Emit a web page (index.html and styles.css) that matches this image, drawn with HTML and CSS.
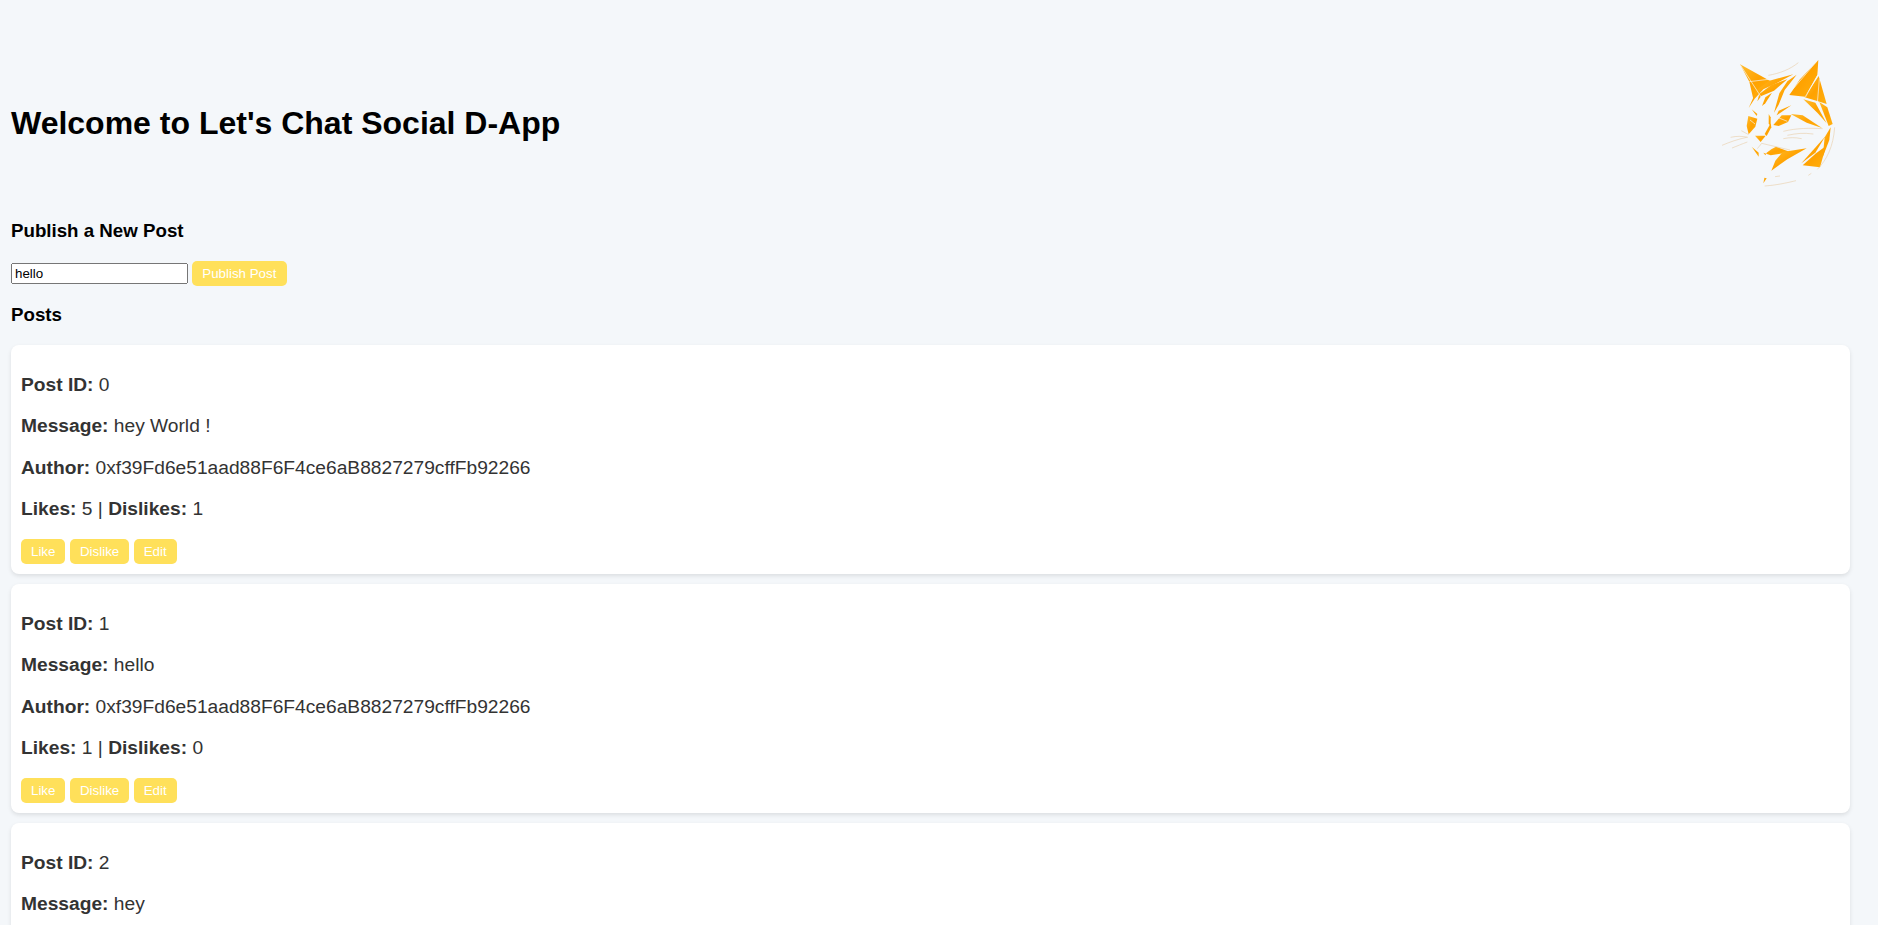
FILE: index.html
```html
<!DOCTYPE html>
<html lang="en">
<head>
  <meta charset="UTF-8">
  <title>Let's Chat Social D-App</title>
  <link rel="stylesheet" href="styles.css">
</head>
<body>

  <header class="top-bar">
    <h1>Welcome to Let's Chat Social D-App</h1>
    <svg class="logo" viewBox="0 0 534 480">
      <defs>
        <linearGradient id="fur" x1="0" y1="0" x2="1" y2="1">
          <stop offset="0" stop-color="#ffbc2e"></stop>
          <stop offset="0.5" stop-color="#ffa200"></stop>
          <stop offset="1" stop-color="#ffb010"></stop>
        </linearGradient>
      </defs>
      <g fill="url(#fur)">
        <!-- left ear and forehead bands -->
        <polygon points="120,73 212,124 178,150 160,178 148,125"></polygon>
        <polygon points="208,122 280,103 232,128 190,148 164,176 146,204 170,150"></polygon>
        <polygon points="215,134 262,118 222,152 184,168 172,184 178,162"></polygon>
        <polygon points="290,104 254,150 236,194 222,218 238,160 262,124"></polygon>
        <polygon points="196,172 216,158 196,190 186,198"></polygon>
        <!-- right ear and side of the head -->
        <polygon points="355,60 352,105 315,170 268,165 300,118"></polygon>
        <polygon points="356,108 380,192 354,184 314,172"></polygon>
        <polygon points="358,186 382,202 398,252 386,258"></polygon>
        <polygon points="310,178 346,188 380,250 352,218"></polygon>
        <!-- eyes and brow stripes -->
        <polygon points="145,228 172,236 166,260 146,283 140,258"></polygon>
        <polygon points="220,255 245,226 274,226 264,246 236,258"></polygon>
        <polygon points="155,208 172,222 170,228"></polygon>
        <polygon points="236,212 274,196 248,214 230,226"></polygon>
        <polygon points="272,222 308,226 366,264 320,248"></polygon>
        <polygon points="206,222 212,232 212,262 206,250"></polygon>
        <polygon points="212,250 214,262 200,288 194,282"></polygon>
        <!-- nose and mouth -->
        <polygon points="165,287 197,287 182,306"></polygon>
        <polygon points="155,320 176,338 176,350"></polygon>
        <polygon points="190,338 212,346 270,336 228,320 214,328 200,338 196,346"></polygon>
        <!-- neck and jaw -->
        <polygon points="320,325 248,336 226,362 214,392 262,358"></polygon>
        <polygon points="375,290 304,370 346,338"></polygon>
        <polygon points="378,318 360,382 308,376 348,340"></polygon>
        <polygon points="374,292 392,262 388,300 368,352"></polygon>
        <polygon points="193,413 200,415 190,430"></polygon>
      </g>
      <g fill="none" stroke="#f4f7fa" stroke-width="2">
        <!-- light cuts over the fur -->
        <path d="M122,76 L184,172"></path>
        <path d="M148,125 L205,118"></path>
        <path d="M352,62 L268,160"></path>
        <path d="M354,104 L316,172"></path>
        <path d="M358,118 L352,190"></path>
        <path d="M232,232 L262,244"></path>
        <path d="M150,240 L165,252"></path>
      </g>
      <g fill="none" stroke="#e6c596" stroke-width="1.5">
        <!-- whiskers and loose lines -->
        <path d="M205,106 C240,100 270,88 295,68"></path>
        <path d="M66,316 C90,306 112,298 140,292"></path>
        <path d="M92,292 C110,288 125,288 144,292"></path>
        <path d="M96,324 C112,318 125,312 142,306"></path>
        <path d="M124,272 L146,284"></path>
        <path d="M250,274 C290,264 330,264 368,266"></path>
        <path d="M262,286 C290,280 310,278 340,282"></path>
        <path d="M250,296 C270,292 285,292 305,296"></path>
        <path d="M352,388 C380,360 400,320 404,262"></path>
        <path d="M194,438 C225,436 255,430 288,422"></path>
        <path d="M225,410 L240,408"></path>
        <path d="M325,406 L334,400"></path>
        <path d="M185,310 L172,326 M185,310 L270,330"></path>
      </g>
    </svg>
  </header>

  <h3>Publish a New Post</h3>
  <div class="publish-row">
    <input type="text" value="hello">
    <button class="btn">Publish Post</button>
  </div>

  <h3>Posts</h3>
  <div class="post-list">
    <div class="post">
      <p><strong>Post ID:</strong> 0</p>
      <p><strong>Message:</strong> hey World !</p>
      <p><strong>Author:</strong> 0xf39Fd6e51aad88F6F4ce6aB8827279cffFb92266</p>
      <p><strong>Likes:</strong> 5 | <strong>Dislikes:</strong> 1</p>
      <div class="post-actions">
        <button class="btn">Like</button>
        <button class="btn">Dislike</button>
        <button class="btn">Edit</button>
      </div>
    </div>
    <div class="post">
      <p><strong>Post ID:</strong> 1</p>
      <p><strong>Message:</strong> hello</p>
      <p><strong>Author:</strong> 0xf39Fd6e51aad88F6F4ce6aB8827279cffFb92266</p>
      <p><strong>Likes:</strong> 1 | <strong>Dislikes:</strong> 0</p>
      <div class="post-actions">
        <button class="btn">Like</button>
        <button class="btn">Dislike</button>
        <button class="btn">Edit</button>
      </div>
    </div>
    <div class="post">
      <p><strong>Post ID:</strong> 2</p>
      <p><strong>Message:</strong> hey</p>
    </div>
  </div>

</body>
</html>
```

FILE: styles.css
```css
html, body {
  height: 925px;
  overflow: hidden;
}

body {
  margin: 0;
  padding: 0 28px 0 11px;
  background: #f4f7fa;
  color: #000;
  font-family: "Liberation Sans", Arial, sans-serif;
}

.top-bar {
  display: flex;
  justify-content: space-between;
  align-items: center;
  box-sizing: border-box;
  height: 220px;
  padding-top: 26px;
}

.top-bar h1 {
  margin: 0;
  font-size: 32px;
  font-weight: bold;
}

.logo {
  width: 178px;
  height: 160px;
  margin: -7px -28px 0 0;
  filter: blur(0.4px);
}

h3 {
  margin: 0;
  font-size: 18.72px;
  font-weight: bold;
}

.publish-row {
  display: flex;
  align-items: center;
  gap: 4px;
  margin: 19px 0 18px;
}

input {
  width: 177px;
  height: 21px;
  box-sizing: border-box;
  padding: 1px 2px;
  font-family: inherit;
  font-size: 13.33px;
}

.btn {
  height: 25px;
  padding: 0 10.3px;
  background: #ffe05a;
  color: #fff;
  border: none;
  border-radius: 5px;
  font-family: inherit;
  font-size: 13.33px;
  cursor: pointer;
}

.post-list {
  display: flex;
  flex-direction: column;
  gap: 10px;
  margin-top: 19px;
}

.post {
  padding: 10px;
  height: 229px;
  box-sizing: border-box;
  background: #fff;
  color: #333;
  border-radius: 8px;
  box-shadow: 0 2px 4px rgba(0, 0, 0, 0.1);
  font-size: 19.2px;
}

.post p {
  margin: 19.2px 0;
}

.post-actions {
  display: flex;
  gap: 4.5px;
}

.post-actions .btn {
  padding: 0 10px;
}
```
